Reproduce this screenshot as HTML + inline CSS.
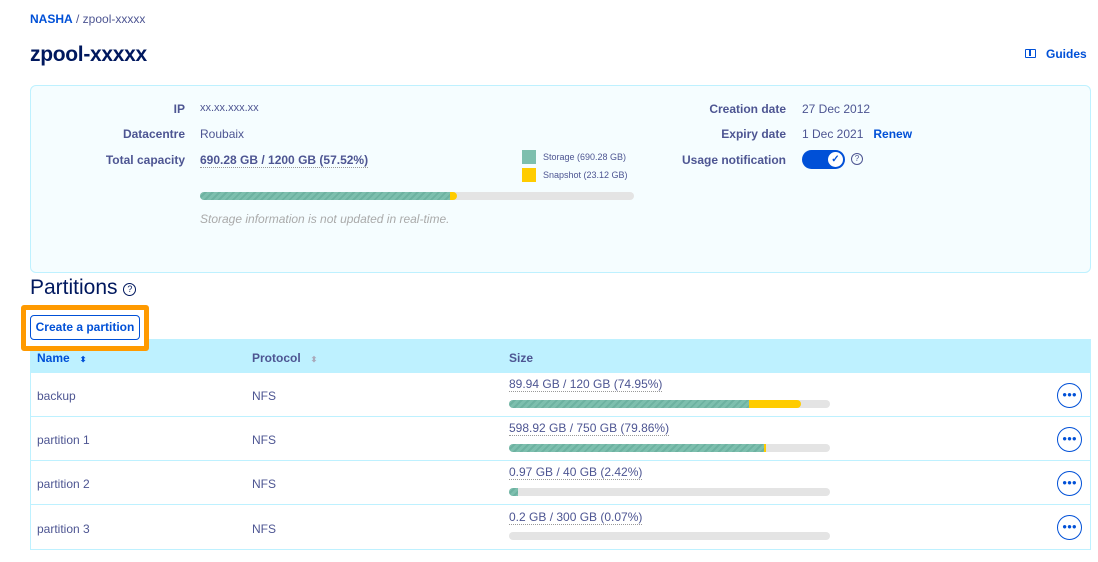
<!DOCTYPE html><html><head><meta charset="utf-8"><style>
*{margin:0;padding:0;box-sizing:border-box}
body{width:1098px;height:562px;background:#fff;font-family:"Liberation Sans",sans-serif;color:#4d5592;position:relative;overflow:hidden;font-size:12px}
.a{position:absolute;white-space:nowrap}
.b{font-weight:bold}
.lbl{font-weight:bold;text-align:right;width:160px;color:#4d5592}
.bar{position:absolute;height:8px;background:#e4e4e4;border-radius:4px;overflow:hidden}
.g{position:absolute;left:0;top:0;height:100%;background:repeating-linear-gradient(135deg,#7dbfae 0 3px,#6db2a1 3px 5px)}
.y{position:absolute;top:0;height:100%;background:#ffcc00}
.dot{border-bottom:1px dotted #999}
.row{position:absolute;left:30px;width:1061px;height:44px;border-bottom:1px solid #bef1ff;border-left:1px solid #bef1ff;border-right:1px solid #bef1ff}
.more{position:absolute;left:1057px;width:25px;height:25px;border:1.5px solid #0050d7;border-radius:50%;color:#0050d7;font-size:8px;font-weight:bold;text-align:center;line-height:21px;letter-spacing:0px}
</style></head><body>
<div class="a" style="left:30px;top:12px;font-size:12px"><span style="color:#0050d7;font-weight:bold">NASHA</span> / zpool-xxxxx</div>
<div class="a b" style="left:30px;top:43px;font-size:21px;color:#00185e;letter-spacing:-0.3px">zpool-xxxxx</div>
<div class="a" style="left:1025px;top:49px;width:11px;height:9px;border:1.5px solid #0050d7;border-radius:1px"><div style="position:absolute;left:3px;top:0;width:2px;height:6px;border-left:1px solid #0050d7;border-right:1px solid #0050d7"></div></div>
<div class="a b" style="left:1046px;top:47px;color:#0050d7">Guides</div>
<div class="a" style="left:30px;top:85px;width:1061px;height:188px;background:#f5fdff;border:1px solid #bef1ff;border-radius:6px"></div>
<div class="a lbl" style="left:25px;top:102px">IP</div><div class="a" style="left:200px;top:102px;font-size:11px">xx.xx.xxx.xx</div>
<div class="a lbl" style="left:25px;top:127px">Datacentre</div><div class="a" style="left:200px;top:127px">Roubaix</div>
<div class="a lbl" style="left:25px;top:153px">Total capacity</div><div class="a b dot" style="left:200px;top:153px">690.28 GB / 1200 GB (57.52%)</div>
<div class="a" style="left:522px;top:150px;width:14px;height:14px;background:#7dbfae"></div><div class="a" style="left:543px;top:152px;font-size:9px">Storage (690.28 GB)</div>
<div class="a" style="left:522px;top:168px;width:14px;height:14px;background:#ffcc00"></div><div class="a" style="left:543px;top:170px;font-size:9px">Snapshot (23.12 GB)</div>
<div class="bar" style="left:200px;top:192px;width:434px"><div class="g" style="width:250px"></div><div class="y" style="left:250px;width:7px;border-radius:0 4px 4px 0"></div></div>
<div class="a" style="left:200px;top:212px;font-style:italic;color:#aaa">Storage information is not updated in real-time.</div>
<div class="a lbl" style="left:626px;top:102px">Creation date</div><div class="a" style="left:802px;top:102px">27 Dec 2012</div>
<div class="a lbl" style="left:626px;top:127px">Expiry date</div><div class="a" style="left:802px;top:127px">1 Dec 2021 &nbsp;&nbsp;<b style="color:#0050d7">Renew</b></div>
<div class="a lbl" style="left:626px;top:153px">Usage notification</div>
<div class="a" style="left:802px;top:150px;width:43px;height:19px;background:#0050d7;border-radius:10px"><div style="position:absolute;right:2px;top:2px;width:15px;height:15px;background:#fff;border-radius:50%;color:#0050d7;font-size:10px;text-align:center;line-height:15px;font-weight:bold">✓</div></div>
<div class="a" style="left:851px;top:153px;width:12px;height:12px;border:1px solid #4d5592;border-radius:50%;font-size:8px;text-align:center;line-height:10px">?</div>
<div class="a" style="left:30px;top:276px;font-size:21px;color:#00185e">Partitions <span style="display:inline-block;width:13px;height:13px;border:1.5px solid #00185e;border-radius:50%;font-size:9px;text-align:center;line-height:10px;vertical-align:2px">?</span></div>
<div class="a" style="left:30px;top:339px;width:1061px;height:34px;background:#bef1ff"></div>
<div class="a" style="left:21px;top:305px;width:128px;height:46px;border:5px solid #ff9a00;border-radius:3px;background:#fff"></div>
<div class="a b" style="left:30px;top:315px;width:110px;height:25px;border:1px solid #0050d7;border-radius:4px;color:#0050d7;text-align:center;line-height:23px">Create a partition</div>
<div class="a b" style="left:37px;top:351px;color:#0050d7">Name &nbsp;&nbsp;<span style="font-size:8px">⬍</span></div>
<div class="a b" style="left:252px;top:351px">Protocol &nbsp;&nbsp;<span style="font-size:8px;color:#aab">⬍</span></div>
<div class="a b" style="left:509px;top:351px">Size</div>
<div class="row" style="top:373px"></div><div class="row" style="top:417px"></div><div class="row" style="top:461px"></div><div class="row" style="top:505px;height:45px"></div>
<div class="a" style="left:37px;top:389px">backup</div><div class="a" style="left:252px;top:389px">NFS</div>
<div class="a" style="left:37px;top:433px">partition 1</div><div class="a" style="left:252px;top:433px">NFS</div>
<div class="a" style="left:37px;top:477px">partition 2</div><div class="a" style="left:252px;top:477px">NFS</div>
<div class="a" style="left:37px;top:522px">partition 3</div><div class="a" style="left:252px;top:522px">NFS</div>
<div class="a dot" style="left:509px;top:377px">89.94 GB / 120 GB (74.95%)</div>
<div class="bar" style="left:509px;top:400px;width:321px"><div class="g" style="width:240px"></div><div class="y" style="left:240px;width:52px;border-radius:0 4px 4px 0"></div></div>
<div class="a dot" style="left:509px;top:421px">598.92 GB / 750 GB (79.86%)</div>
<div class="bar" style="left:509px;top:444px;width:321px"><div class="g" style="width:255px"></div><div class="y" style="left:255px;width:2px"></div></div>
<div class="a dot" style="left:509px;top:465px">0.97 GB / 40 GB (2.42%)</div>
<div class="bar" style="left:509px;top:488px;width:321px"><div class="g" style="width:9px"></div></div>
<div class="a dot" style="left:509px;top:510px">0.2 GB / 300 GB (0.07%)</div>
<div class="bar" style="left:509px;top:532px;width:321px"></div>
<div class="more a" style="top:383px">●●●</div><div class="more a" style="top:427px">●●●</div><div class="more a" style="top:471px">●●●</div><div class="more a" style="top:515px">●●●</div>
</body></html>
